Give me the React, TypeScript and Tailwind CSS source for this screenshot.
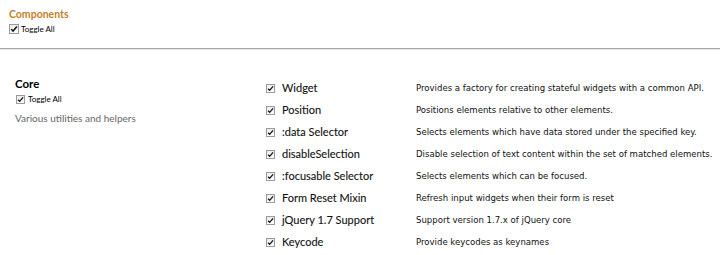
import React from "react";

function Check({ size = 9 }: { size?: number }) {
  return (
    <span
      className="inline-flex items-center justify-center border border-[#9a9a9a] bg-gradient-to-b from-[#ececec] to-[#ffffff] shrink-0"
      style={{ width: size, height: size }}
    >
      <svg width={size - 2} height={size - 2} viewBox="0 0 8 8">
        <path d="M1.2 4.2 L3.1 6.1 L6.9 1.6" fill="none" stroke="#1a1a1a" strokeWidth="1.6" />
      </svg>
    </span>
  );
}

const rows: [string, string][] = [
  ["Widget", "Provides a factory for creating stateful widgets with a common API."],
  ["Position", "Positions elements relative to other elements."],
  [":data Selector", "Selects elements which have data stored under the specified key."],
  ["disableSelection", "Disable selection of text content within the set of matched elements."],
  [":focusable Selector", "Selects elements which can be focused."],
  ["Form Reset Mixin", "Refresh input widgets when their form is reset"],
  ["jQuery 1.7 Support", "Support version 1.7.x of jQuery core"],
  ["Keycode", "Provide keycodes as keynames"],
];

export default function App() {
  return (
    <div className="w-[720px] h-[255px] bg-white overflow-hidden font-['Lato',sans-serif]">
      <div className="pl-[9px] pt-[8px]">
        <div className="text-[10.5px] leading-[12px] font-bold text-[#c3802b]">Components</div>
        <div className="flex items-center gap-[2px] mt-[4px]">
          <Check size={10} />
          <span className="text-[8px] leading-[10px] text-black">Toggle All</span>
        </div>
      </div>
      <div className="mt-[14px] h-[2px] border-t border-[#a8a8a8] border-b border-b-[#e4e4e4]" />
      <div className="flex pt-[27px]">
        <div className="w-[266px] shrink-0 pl-[15px]">
          <div className="text-[11.5px] leading-[14px] font-bold text-black">Core</div>
          <div className="flex items-center gap-[3px] ml-[1px] mt-[3px]">
            <Check size={9} />
            <span className="text-[8px] leading-[10px] text-black">Toggle All</span>
          </div>
          <div className="mt-[8px] text-[10px] leading-[13px] text-[#666666]">Various utilities and helpers</div>
        </div>
        <div className="flex flex-col">
          {rows.map(([label, desc]) => (
            <div key={label} className="flex items-center h-[22px] whitespace-nowrap">
              <Check size={9} />
              <span className="ml-[7px] w-[134px] shrink-0 text-[11px] font-normal text-[#111111] [-webkit-text-stroke:0.1px_#111111]">{label}</span>
              <span className="text-[9.5px] text-[#111111] font-['DejaVu_Sans_Condensed','DejaVu_Sans',sans-serif]">{desc}</span>
            </div>
          ))}
        </div>
      </div>
    </div>
  );
}
